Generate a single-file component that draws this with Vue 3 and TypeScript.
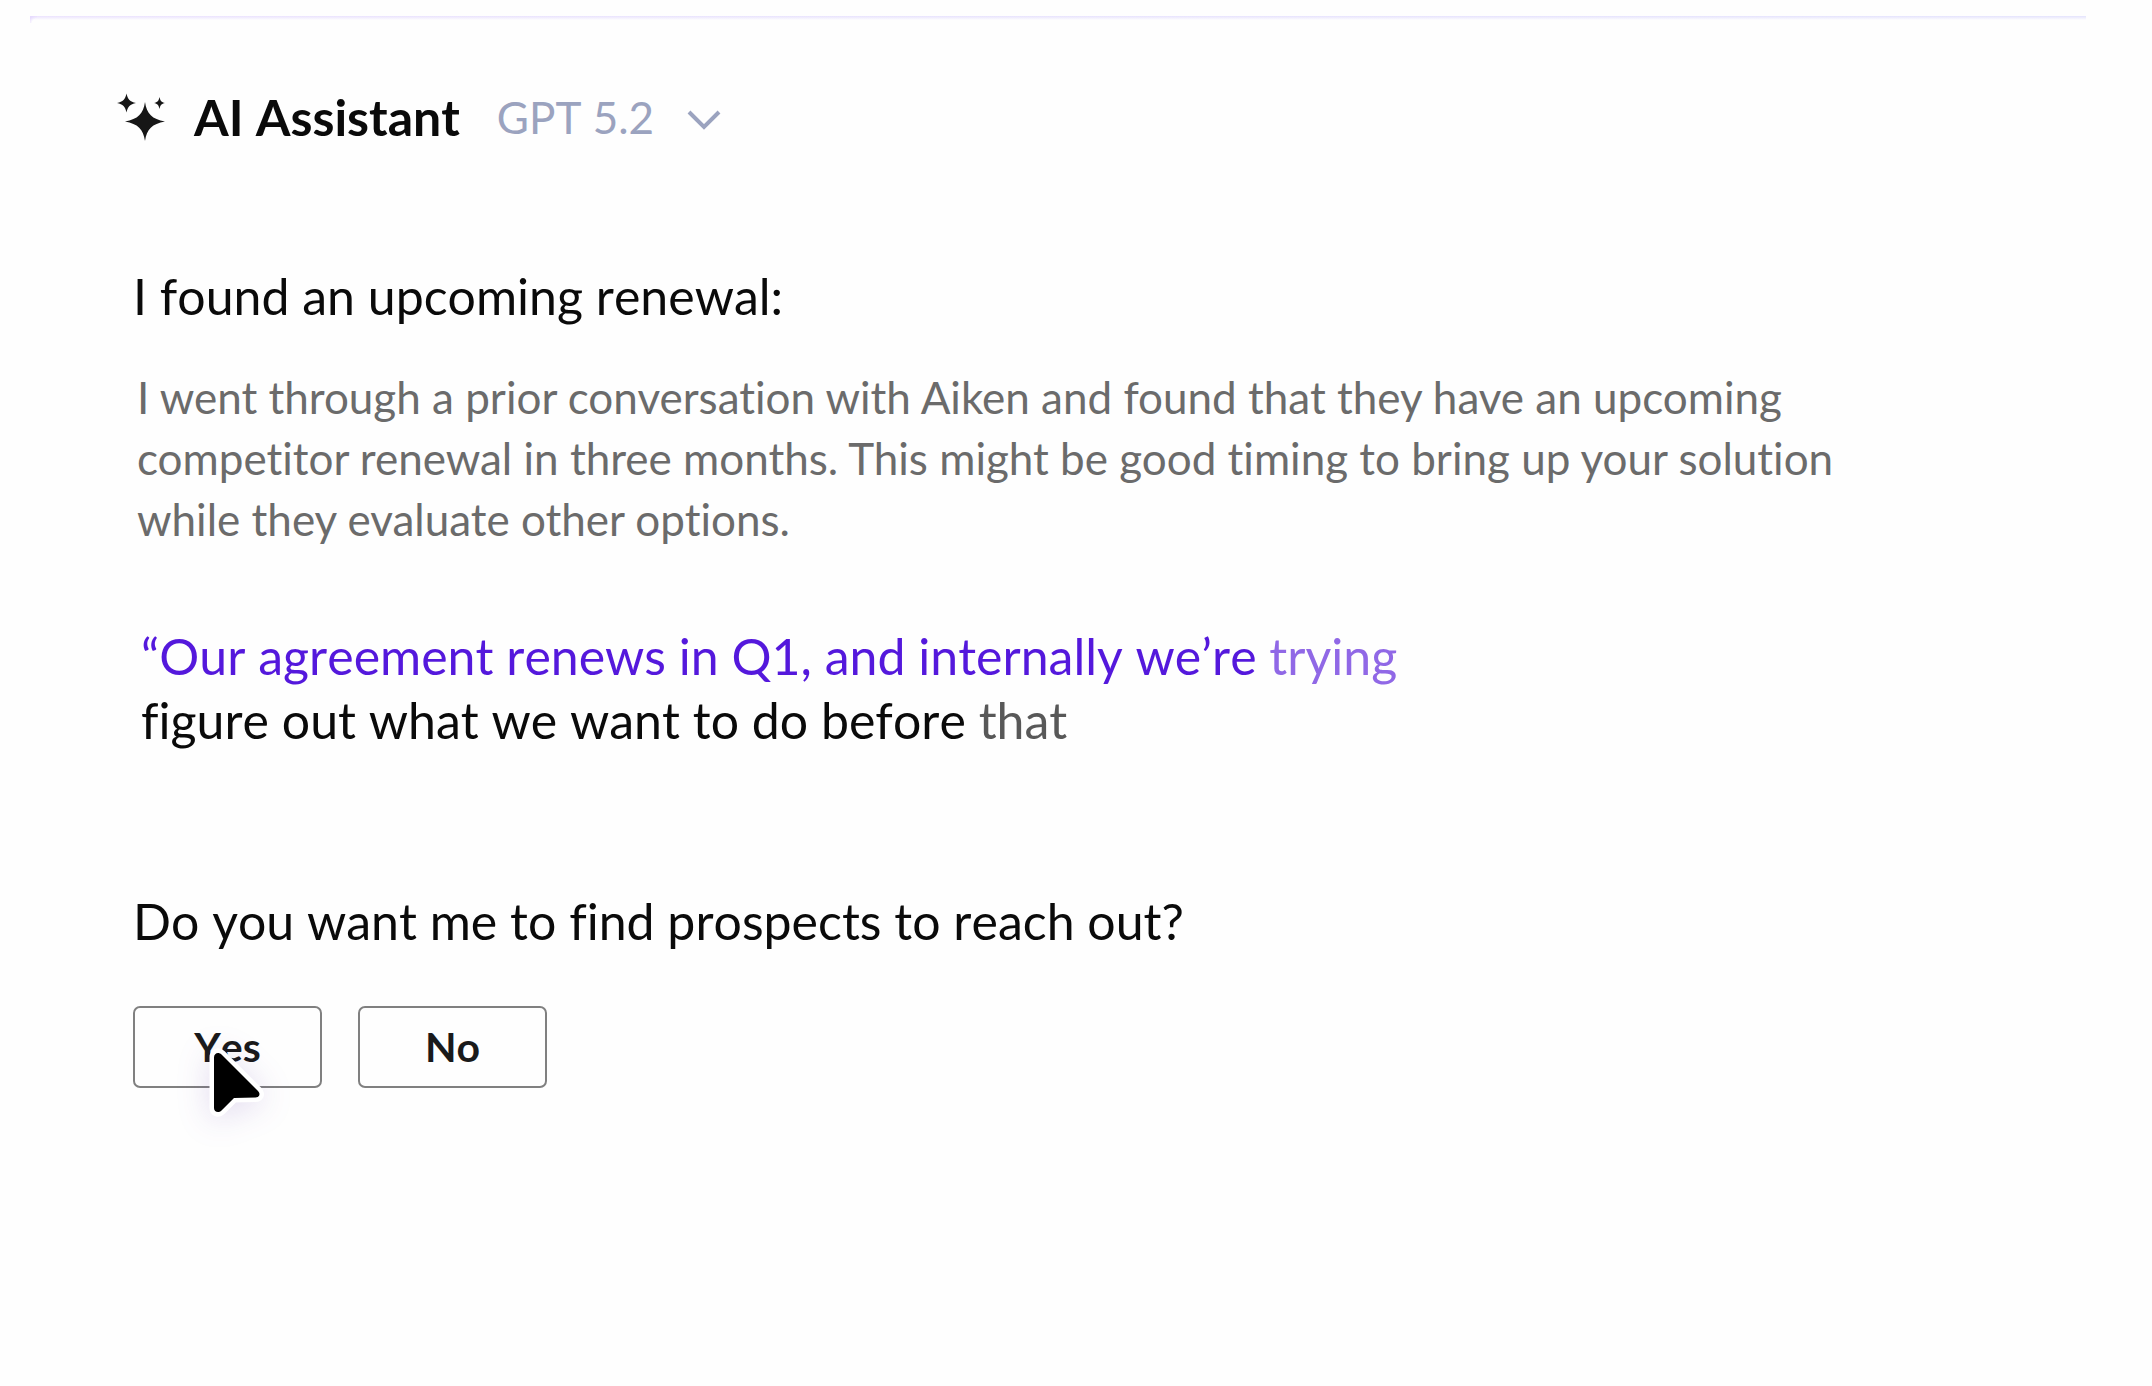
<script setup lang="ts">
import { ref } from 'vue'

interface QuoteLine {
  text: string
  trailing: string
  tone: 'accent' | 'plain'
}

const model = ref('GPT 5.2')

const summary: string[] = [
  'I went through a prior conversation with Aiken and found that they have an upcoming',
  'competitor renewal in three months. This might be good timing to bring up your solution',
  'while they evaluate other options.',
]

const quote: QuoteLine[] = [
  { text: '“Our agreement renews in Q1, and internally we’re', trailing: 'trying', tone: 'accent' },
  { text: 'figure out what we want to do before', trailing: 'that', tone: 'plain' },
]
</script>

<template>
  <main class="card">
    <header class="header">
      <svg class="sparkles" viewBox="0 0 48 48" aria-hidden="true">
        <path d="M28 9C29.800 21 35 26 48 28.500C35 31 29.800 36 28 48C26.200 36 21 31 8 28.500C21 26 26.200 21 28 9Z" />
        <path d="M9.500 0.500C10.700 6.500 13 8.800 19 10C13 11.200 10.700 13.500 9.500 19.500C8.300 13.500 6 11.200 0 10C6 8.800 8.300 6.500 9.500 0.500Z" />
        <path d="M42.500 4C43.300 8 44.500 9.200 48 10C44.500 10.800 43.300 12 42.500 16C41.700 12 40.500 10.800 37 10C40.500 9.200 41.700 8 42.500 4Z" />
      </svg>
      <h1 class="title">AI Assistant</h1>
      <button class="model" type="button" aria-haspopup="listbox">
        <span>{{ model }}</span>
        <svg class="chevron" viewBox="0 0 34 20" aria-hidden="true">
          <path d="M2 2L17 17L32 2" />
        </svg>
      </button>
    </header>

    <h2 class="lead">I found an upcoming renewal:</h2>
    <p class="summary">
      <span v-for="line in summary" :key="line" class="line">{{ line }}</span>
    </p>

    <blockquote class="quote">
      <span v-for="line in quote" :key="line.tone" class="line" :class="line.tone">
        {{ line.text }} <span class="trailing">{{ line.trailing }}</span>
      </span>
    </blockquote>

    <p class="question">Do you want me to find prospects to reach out?</p>
    <div class="actions">
      <button class="choice" type="button">
        Yes
        <svg class="cursor" viewBox="0 0 60 74" aria-hidden="true">
          <path d="M7 11.500C7 7 11.500 5.500 14.500 8.500L51 45C54 48 52 51.500 48.500 51.500L27 52L14.500 64.500C11.500 67.500 7 66 7 62Z" />
        </svg>
      </button>
      <button class="choice" type="button">No</button>
    </div>
  </main>
</template>

<style>
body {
  margin: 0;
  background: #fefefe;
}
</style>

<style scoped>
.card {
  box-sizing: border-box;
  min-height: calc(100vh - 32px);
  margin: 16px 66px 16px 30px;
  padding: 71px 100px 40px 103px;
  background:
    radial-gradient(circle at 8px 8px, transparent 6px, #e6dafe 10px) 0 0 / 7px 7px no-repeat,
    linear-gradient(transparent, #fefefe) 0 0 / 100% 4px no-repeat,
    linear-gradient(90deg, #ebe2fe, #e4e3fd) 0 0 / 100% 4px no-repeat;
  color: #0a0a0a;
  font-family: Lato, "Liberation Sans", sans-serif;
  font-size: 50px;
  font-kerning: none;
  font-variant-ligatures: none;
  line-height: 60px;
}

.header {
  display: flex;
  align-items: center;
  margin-left: -16px;
}

.sparkles {
  width: 48px;
  height: 48px;
  margin-right: 29px;
  fill: #161616;
}

.title {
  margin: 0;
  font-size: 50px;
  font-weight: 700;
}

.model {
  display: flex;
  align-items: center;
  gap: 33px;
  margin-left: 37px;
  padding: 0;
  border: 0;
  background: none;
  color: #9ba3bf;
  font: inherit;
  font-size: 44px;
  font-kerning: none;
  line-height: 60px;
}

.chevron {
  width: 34px;
  height: 20px;
  margin-top: 6px;
  fill: none;
  stroke: currentColor;
  stroke-width: 4;
}

.lead {
  margin: 119px 0 0;
  font-size: 50px;
  font-weight: 400;
}

.summary {
  margin: 41px 0 0 4px;
  color: #6b6b6b;
  font-size: 44px;
  font-kerning: normal;
  line-height: 61px;
}

.line {
  display: block;
}

.quote {
  margin: 74px 0 0 8px;
  line-height: 64px;
}

.accent {
  color: #5418dc;
}

.accent .trailing {
  color: #9068e6;
}

.plain .trailing {
  color: #585858;
}

.question {
  margin: 139px 0 0;
}

.actions {
  display: flex;
  gap: 36px;
  margin: 55px 0 0;
}

.choice {
  position: relative;
  box-sizing: border-box;
  width: 189px;
  height: 82px;
  padding: 0;
  border: 2px solid #808080;
  border-radius: 7px;
  background: #fefefe;
  color: #1a1a1a;
  font: inherit;
  font-size: 41px;
  font-kerning: none;
  font-weight: 700;
}

.cursor {
  position: absolute;
  top: 38px;
  left: 72px;
  width: 60px;
  height: 74px;
  overflow: visible;
  fill: #000;
  stroke: #fff;
  stroke-width: 9;
  stroke-linejoin: round;
  paint-order: stroke;
  filter: drop-shadow(0 4px 16px rgba(80, 40, 160, 0.16));
}
</style>
